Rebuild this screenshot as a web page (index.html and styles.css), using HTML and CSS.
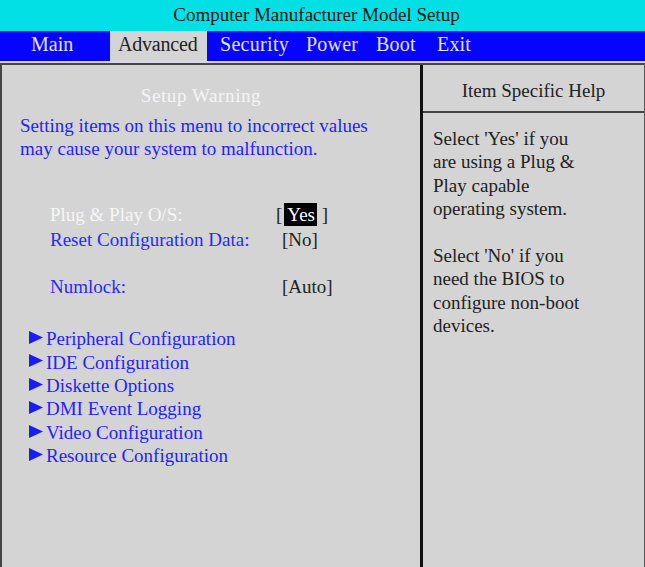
FILE: index.html
```html
<!DOCTYPE html>
<html>
<head>
<meta charset="utf-8">
<link rel="stylesheet" href="styles.css">
</head>
<body>
<div class="screen">
  <div class="title">Computer Manufacturer Model Setup</div>
  <div class="menu">
    <span class="tab tab-main">Main</span>
    <span class="tab tab-active">Advanced</span>
    <span class="tab tab-security">Security</span>
    <span class="tab tab-power">Power</span>
    <span class="tab tab-boot">Boot</span>
    <span class="tab tab-exit">Exit</span>
  </div>
  <div class="sep"></div>
  <div class="main">
    <div class="left">
      <div class="warn-title">Setup Warning</div>
      <div class="warn-text">Setting items on this menu to incorrect values<br>may cause your system to malfunction.</div>
      <div class="items">
        <div class="row row-sel"><span class="label">Plug &amp; Play O/S:</span><span class="value">[<span class="hl">Yes</span> ]</span></div>
        <div class="row"><span class="label">Reset Configuration Data:</span><span class="value value-s">[No]</span></div>
        <div class="row row-gap"><span class="label">Numlock:</span><span class="value value-s">[Auto]</span></div>
      </div>
      <ul class="submenu">
        <li><svg class="arrow" viewBox="0 0 14 13"><polygon points="0,0 14,6.5 0,13"/></svg>Peripheral Configuration</li>
        <li><svg class="arrow" viewBox="0 0 14 13"><polygon points="0,0 14,6.5 0,13"/></svg>IDE Configuration</li>
        <li><svg class="arrow" viewBox="0 0 14 13"><polygon points="0,0 14,6.5 0,13"/></svg>Diskette Options</li>
        <li><svg class="arrow" viewBox="0 0 14 13"><polygon points="0,0 14,6.5 0,13"/></svg>DMI Event Logging</li>
        <li><svg class="arrow" viewBox="0 0 14 13"><polygon points="0,0 14,6.5 0,13"/></svg>Video Configuration</li>
        <li><svg class="arrow" viewBox="0 0 14 13"><polygon points="0,0 14,6.5 0,13"/></svg>Resource Configuration</li>
      </ul>
    </div>
    <div class="right">
      <div class="help-head">Item Specific Help</div>
      <div class="help-body">
        <p>Select 'Yes' if you<br>are using a Plug &amp;<br>Play capable<br>operating system.</p>
        <p>Select 'No' if you<br>need the BIOS to<br>configure non-boot<br>devices.</p>
      </div>
    </div>
  </div>
</div>
</body>
</html>
```
FILE: styles.css
```css
html, body {
  margin: 0;
  padding: 0;
  background: #d4d4d4;
}
.screen {
  width: 645px;
  height: 567px;
  display: flex;
  flex-direction: column;
  font-family: "Liberation Serif", "Times New Roman", serif;
  overflow: hidden;
}
.title {
  height: 31px;
  background: #02e0e6;
  color: #111;
  font-size: 19px;
  line-height: 30px;
  text-align: center;
  padding-right: 12px;
}
.menu {
  height: 30px;
  background: #0505ff;
  display: flex;
  align-items: flex-start;
  font-size: 20px;
  color: #e4e4ec;
  padding-left: 31px;
}
.tab {
  line-height: 27px;
  box-sizing: border-box;
  white-space: nowrap;
}
.tab-main { width: 79px; }
.tab-active {
  width: 97px;
  height: 32px;
  background: #d4d4d4;
  color: #222;
  padding-left: 8px;
  letter-spacing: -0.2px;
}
.tab-security { margin-left: 13px; width: 86px; letter-spacing: 0.3px; }
.tab-power { width: 70px; letter-spacing: 0.2px; }
.tab-boot { width: 61px; letter-spacing: 0.2px; }
.tab-exit { letter-spacing: 0.2px; }
.sep {
  height: 2px;
  background: #d8d8e8;
}
.main {
  flex: 1;
  display: grid;
  grid-template-columns: 421px 1fr;
  border-top: 2px solid #454545;
  border-left: 2px solid #454545;
  border-right: 1px solid #555;
  background: #d4d4d4;
  font-size: 19px;
  line-height: 23.4px;
}
.left {
  border-right: 3px solid #111;
}
.warn-title {
  color: #f4f4f4;
  text-align: center;
  margin-top: 19px;
  line-height: 23px;
  letter-spacing: 0.6px;
  padding-right: 20px;
}
.warn-text {
  color: #2424f4;
  margin-top: 7px;
  margin-left: 18px;
  white-space: nowrap;
}
.items {
  margin-top: 42px;
}
.row {
  display: flex;
  height: 24.5px;
  align-items: center;
}
.row-gap {
  margin-top: 22.5px;
}
.label {
  color: #2a2af2;
  margin-left: 48px;
  width: 226px;
  white-space: nowrap;
}
.row-sel .label {
  color: #f6f6f6;
}
.value {
  color: #222;
}
.value-s {
  margin-left: 6px;
}
.hl {
  background: #000;
  color: #fff;
  padding: 1px 2px 1px 3px;
  margin-left: 2px;
}
.submenu {
  list-style: none;
  margin: 28.5px 0 0 27px;
  padding: 0;
  color: #2424f4;
}
.submenu li {
  display: flex;
  align-items: center;
  height: 23.4px;
  white-space: nowrap;
}
.arrow {
  width: 14px;
  height: 13px;
  fill: #1a1aff;
  margin-right: 3px;
  margin-top: -3px;
  flex: none;
}
.right {
  display: flex;
  flex-direction: column;
}
.help-head {
  height: 46px;
  line-height: 51px;
  text-align: center;
  color: #222;
  border-bottom: 2px solid #454545;
}
.help-body {
  color: #222;
  padding: 14px 0 0 10px;
}
.help-body p {
  margin: 0 0 23.4px 0;
}
```
